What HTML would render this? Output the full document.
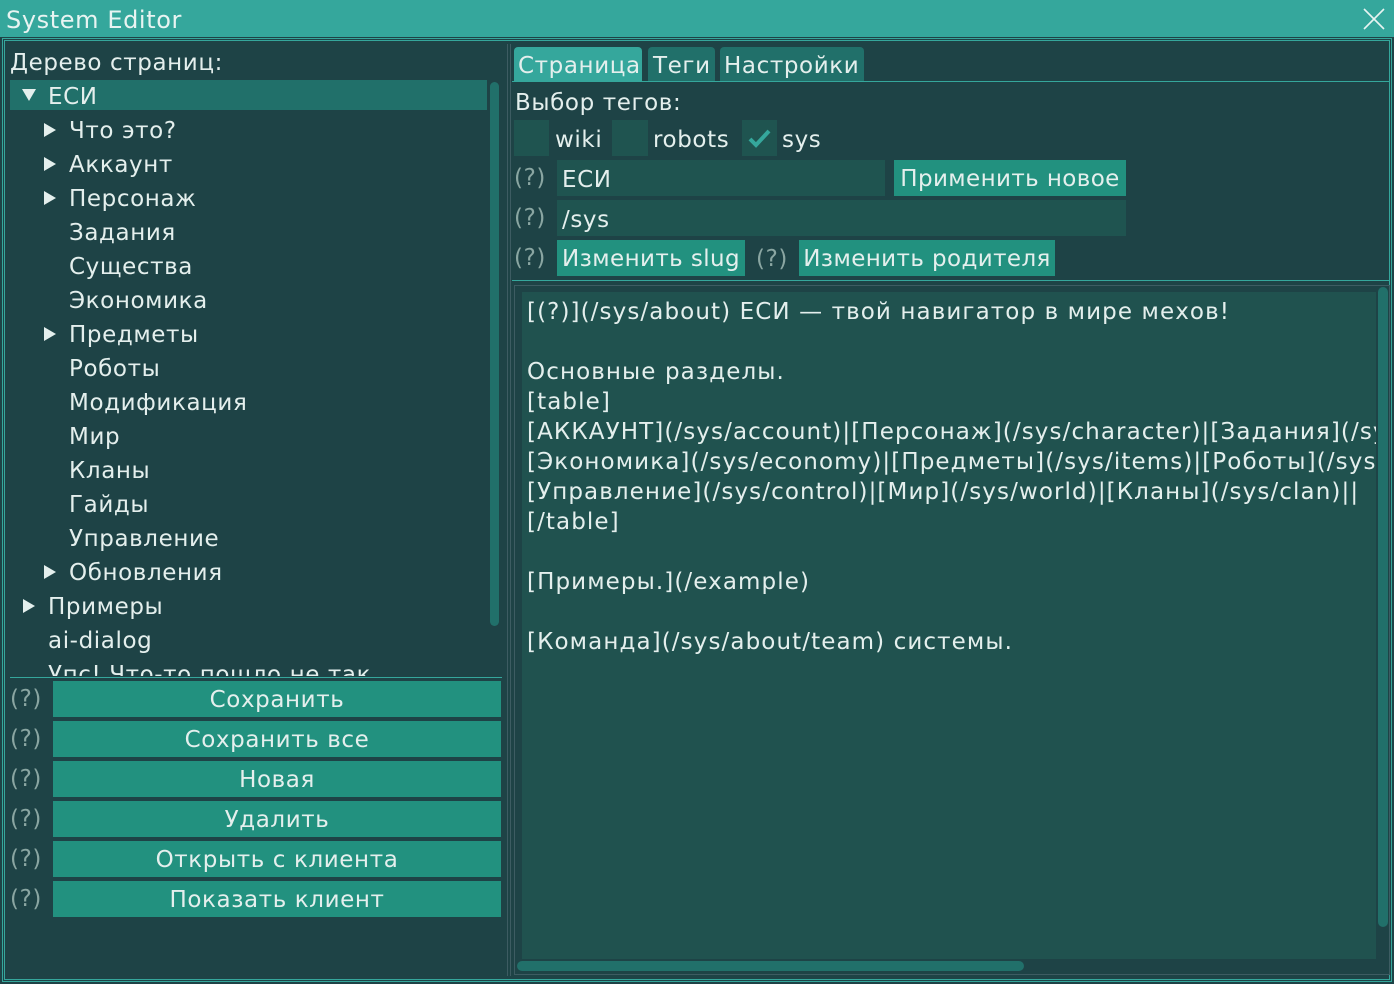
<!DOCTYPE html>
<html><head><meta charset="utf-8"><style>
*{margin:0;padding:0;box-sizing:border-box}
body{width:1394px;height:984px;background:#1e4346;font-family:"DejaVu Sans","Liberation Sans",sans-serif;color:#e4efed;font-size:23px;position:relative;overflow:hidden;letter-spacing:0.6px}
.a{position:absolute;white-space:nowrap}
.t{line-height:36px}
.btn{background:#22917f;text-align:center;line-height:38px;height:36px}
.q{color:#8aa6a2}
.inp{background:#1f5450}
.tr{position:absolute;width:12px;height:14px}
</style></head><body>
<div class="a" style="left:0;top:0;width:1394px;height:37px;background:#35a79c"></div>
<div class="a" style="left:6px;top:1px;font-size:24px;line-height:38px;color:#e8f4f2">System Editor</div>
<svg class="a" style="left:1362px;top:7px" width="24" height="24"><path d="M2 2L22 22M22 2L2 22" stroke="#e8f4f2" stroke-width="1.6"/></svg>
<div class="a" style="left:2px;top:38px;width:1390px;height:944px;border:1px solid #35a79c"></div>
<div class="a" style="left:4px;top:40px;width:1386px;height:940px;border:1px solid #35a79c"></div>

<div class="a t" style="left:10px;top:45px">Дерево страниц:</div>
<div class="a" style="left:10px;top:80px;width:477px;height:30px;background:#21706a"></div>
<div class="a" style="left:490px;top:82px;width:9px;height:544px;background:#21706a;border-radius:5px"></div>
<div class="a" style="left:10px;top:79px;width:480px;height:597px;overflow:hidden">
<svg class="a" style="left:12px;top:10px" width="14" height="12"><path d="M0 0H14L7 12Z" fill="#e4efed"/></svg>
<div class="a t" style="left:38px;top:0">ЕСИ</div>
<svg class="a" style="left:34px;top:44px" width="12" height="14"><path d="M0 0V14L12 7Z" fill="#e4efed"/></svg>
<div class="a t" style="left:59px;top:34px">Что это?</div>
<svg class="a" style="left:34px;top:78px" width="12" height="14"><path d="M0 0V14L12 7Z" fill="#e4efed"/></svg>
<div class="a t" style="left:59px;top:68px">Аккаунт</div>
<svg class="a" style="left:34px;top:112px" width="12" height="14"><path d="M0 0V14L12 7Z" fill="#e4efed"/></svg>
<div class="a t" style="left:59px;top:102px">Персонаж</div>
<div class="a t" style="left:59px;top:136px">Задания</div>
<div class="a t" style="left:59px;top:170px">Существа</div>
<div class="a t" style="left:59px;top:204px">Экономика</div>
<svg class="a" style="left:34px;top:248px" width="12" height="14"><path d="M0 0V14L12 7Z" fill="#e4efed"/></svg>
<div class="a t" style="left:59px;top:238px">Предметы</div>
<div class="a t" style="left:59px;top:272px">Роботы</div>
<div class="a t" style="left:59px;top:306px">Модификация</div>
<div class="a t" style="left:59px;top:340px">Мир</div>
<div class="a t" style="left:59px;top:374px">Кланы</div>
<div class="a t" style="left:59px;top:408px">Гайды</div>
<div class="a t" style="left:59px;top:442px">Управление</div>
<svg class="a" style="left:34px;top:486px" width="12" height="14"><path d="M0 0V14L12 7Z" fill="#e4efed"/></svg>
<div class="a t" style="left:59px;top:476px">Обновления</div>
<svg class="a" style="left:13px;top:520px" width="12" height="14"><path d="M0 0V14L12 7Z" fill="#e4efed"/></svg>
<div class="a t" style="left:38px;top:510px">Примеры</div>
<div class="a t" style="left:38px;top:544px">ai-dialog</div>
<div class="a t" style="left:38px;top:578px">Упс! Что-то пошло не так</div>
</div>
<div class="a" style="left:10px;top:677px;width:492px;height:1px;background:#35a79c"></div>

<div class="a t q" style="left:10px;top:681px">(?)</div><div class="a btn" style="left:53px;top:681px;width:448px">Сохранить</div>
<div class="a t q" style="left:10px;top:721px">(?)</div><div class="a btn" style="left:53px;top:721px;width:448px">Сохранить все</div>
<div class="a t q" style="left:10px;top:761px">(?)</div><div class="a btn" style="left:53px;top:761px;width:448px">Новая</div>
<div class="a t q" style="left:10px;top:801px">(?)</div><div class="a btn" style="left:53px;top:801px;width:448px">Удалить</div>
<div class="a t q" style="left:10px;top:841px">(?)</div><div class="a btn" style="left:53px;top:841px;width:448px">Открыть с клиента</div>
<div class="a t q" style="left:10px;top:881px">(?)</div><div class="a btn" style="left:53px;top:881px;width:448px">Показать клиент</div>

<div class="a" style="left:507px;top:44px;width:1px;height:932px;background:#3d5c62"></div>
<div class="a" style="left:510px;top:44px;width:1px;height:932px;background:#3d5c62"></div>

<div class="a" style="left:514px;top:47px;width:128px;height:34px;background:#35a79c;border-radius:4px 4px 0 0;line-height:38px;padding-left:4px">Страница</div>
<div class="a" style="left:648px;top:47px;width:67px;height:34px;background:#21706a;border-radius:4px 4px 0 0;line-height:38px;padding-left:5px">Теги</div>
<div class="a" style="left:720px;top:47px;width:144px;height:34px;background:#21706a;border-radius:4px 4px 0 0;line-height:38px;padding-left:4px">Настройки</div>
<div class="a" style="left:512px;top:81px;width:878px;height:1px;background:#35a79c"></div>

<div class="a t" style="left:515px;top:85px">Выбор тегов:</div>
<div class="a inp" style="left:514px;top:120px;width:35px;height:36px"></div>
<div class="a t" style="left:555px;top:122px">wiki</div>
<div class="a inp" style="left:612px;top:120px;width:36px;height:36px"></div>
<div class="a t" style="left:653px;top:122px">robots</div>
<div class="a inp" style="left:742px;top:120px;width:35px;height:36px"></div>
<svg class="a" style="left:742px;top:120px" width="35" height="36"><path d="M8 19L14 25L27 11" stroke="#35a79c" stroke-width="4" fill="none"/></svg>
<div class="a t" style="left:782px;top:122px">sys</div>

<div class="a t q" style="left:514px;top:160px">(?)</div>
<div class="a inp" style="left:557px;top:160px;width:328px;height:36px;line-height:40px;padding-left:5px">ЕСИ</div>
<div class="a btn" style="left:894px;top:160px;width:232px;letter-spacing:0.4px">Применить новое</div>
<div class="a t q" style="left:514px;top:200px">(?)</div>
<div class="a inp" style="left:557px;top:200px;width:569px;height:36px;line-height:40px;padding-left:5px">/sys</div>
<div class="a t q" style="left:514px;top:240px">(?)</div>
<div class="a btn" style="left:557px;top:240px;width:188px;letter-spacing:0.4px">Изменить slug</div>
<div class="a t q" style="left:756px;top:241px">(?)</div>
<div class="a btn" style="left:799px;top:240px;width:256px;letter-spacing:0.4px">Изменить родителя</div>
<div class="a" style="left:512px;top:280px;width:878px;height:1px;background:#35a79c"></div>

<div class="a" style="left:514px;top:285px;width:876px;height:690px;border:1px solid #3d5c62"></div>
<div class="a" style="left:522px;top:292px;width:854px;height:667px;background:#20524f;overflow:hidden">
<div class="a" style="left:5px;top:5px;line-height:30px;letter-spacing:1.1px">[(?)](/sys/about) ЕСИ — твой навигатор в мире мехов!<br><br>Основные разделы.<br>[table]<br>[АККАУНТ](/sys/account)|[Персонаж](/sys/character)|[Задания](/sys/quests)<br>[Экономика](/sys/economy)|[Предметы](/sys/items)|[Роботы](/sys/robots)<br>[Управление](/sys/control)|[Мир](/sys/world)|[Кланы](/sys/clan)||<br>[/table]<br><br>[Примеры.](/example)<br><br>[Команда](/sys/about/team) системы.</div>
</div>
<div class="a" style="left:1378px;top:287px;width:10px;height:640px;background:#21706a;border-radius:5px"></div>
<div class="a" style="left:517px;top:961px;width:507px;height:10px;background:#21706a;border-radius:5px"></div>
</body></html>
